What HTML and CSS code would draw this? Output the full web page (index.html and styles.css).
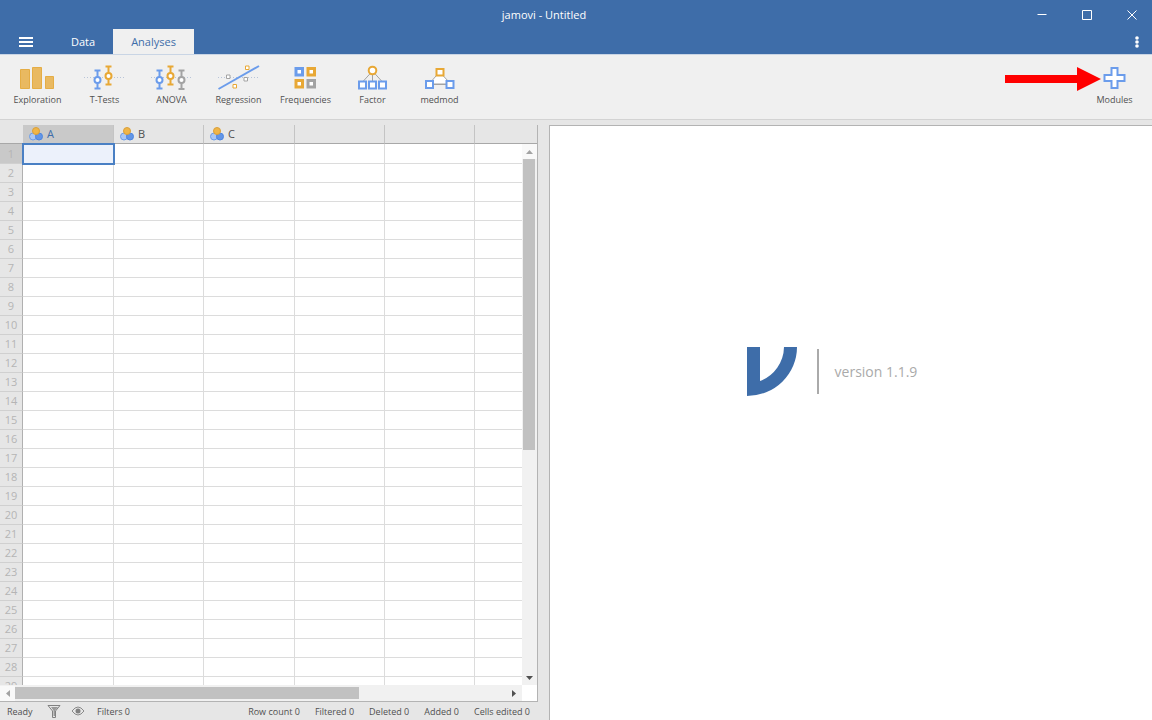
FILE: index.html
```html
<!DOCTYPE html>
<html lang="en">
<head>
<meta charset="utf-8">
<meta name="viewport" content="width=device-width,initial-scale=1">
<title>jamovi - Untitled</title>
<link rel="stylesheet" href="styles.css">
</head>
<body>

<header class="header">
  <div class="titlebar">
    <div class="title">jamovi - Untitled</div>
    <button type="button" class="win-btn" aria-label="Minimize"><svg width="12" height="12"><path d="M1.5 5.5h9"/></svg></button>
    <button type="button" class="win-btn" aria-label="Maximize"><svg width="12" height="12"><path d="M1.5 1.5h9v9h-9z"/></svg></button>
    <button type="button" class="win-btn" aria-label="Close"><svg width="12" height="12"><path d="M1.5 1.5l9 9M10.5 1.5l-9 9"/></svg></button>
  </div>
  <nav class="tabs">
    <button type="button" class="menu-btn" aria-label="Menu"><svg width="14" height="10"><path d="M0 1h14M0 5h14M0 9h14"/></svg></button>
    <button type="button" class="tab">Data</button>
    <button type="button" class="tab active">Analyses</button>
    <button type="button" class="more-btn" aria-label="Settings"><svg width="4" height="12"><circle cx="2" cy="2" r="1.8"/><circle cx="2" cy="6" r="1.8"/><circle cx="2" cy="10" r="1.8"/></svg></button>
  </nav>
</header>

<div class="ribbon">
  <button type="button" class="tool">
    <svg class="icon" viewBox="0 0 45 28"><g fill="#e9b961" stroke="#e5ad45" stroke-width="1"><path d="M5.500 5.500h9v19h-9zM17.500 3.500h9v21h-9zM30.500 12.500h8v12h-8z"/></g></svg>
    <span>Exploration</span>
  </button>
  <button type="button" class="tool">
    <svg class="icon" viewBox="0 0 45 28">
      <path class="dots" d="M2 13.500h42"/>
      <g class="blue"><path d="M15.500 6v19M12.500 6.500h6M12.500 24.500h6"/><circle cx="15.500" cy="16" r="3"/></g>
      <g class="orange"><path d="M26.500 2v19M23.500 2.500h6M23.500 20.500h6"/><circle cx="26.500" cy="12" r="3"/></g>
    </svg>
    <span>T-Tests</span>
  </button>
  <button type="button" class="tool">
    <svg class="icon" viewBox="0 0 45 28">
      <path class="dots" d="M2 13.500h41"/>
      <g class="blue"><path d="M10.500 6v19M7.500 6.500h6M7.500 24.500h6"/><circle cx="10.500" cy="16" r="3"/></g>
      <g class="orange"><path d="M21.500 2v19M18.500 2.500h6M18.500 20.500h6"/><circle cx="21.500" cy="12" r="3"/></g>
      <g class="gray"><path d="M32.500 6v19M29.500 6.500h6M29.500 25h6"/><circle cx="32.500" cy="16" r="3"/></g>
    </svg>
    <span>ANOVA</span>
  </button>
  <button type="button" class="tool">
    <svg class="icon" viewBox="0 0 45 28">
      <path class="dots" d="M2 13.500h41"/>
      <path class="blue" d="M2.500 25L43 2"/>
      <g class="gray thin"><path d="M10.500 11h3.500v3.500h-3.500zM28 13.500h3.500v3.500H28z"/></g>
      <g class="orange thin"><path d="M29.500 2h3.500v3.500h-3.500zM17 20.500h3.500V24H17z"/></g>
    </svg>
    <span>Regression</span>
  </button>
  <button type="button" class="tool">
    <svg class="icon" viewBox="0 0 45 28">
      <g class="thick">
        <path class="blue" d="M13 4.500h6.500V11H13z"/>
        <path class="orange" d="M25 4.500h6.500V11H25zM13 16.500h6.500V23H13z"/>
        <path class="gray" d="M25 16.500h6.500V23H25z"/>
      </g>
    </svg>
    <span>Frequencies</span>
  </button>
  <button type="button" class="tool">
    <svg class="icon" viewBox="0 0 45 28">
      <path class="gray" d="M22.500 7L12.500 18M22.500 7v11M22.500 7l10 11"/>
      <circle class="orange" cx="22.500" cy="6.500" r="3.800"/>
      <path class="blue" d="M9 17.500h7v7H9zM19 17.500h7v7h-7zM29 17.500h7v7h-7z"/>
    </svg>
    <span>Factor</span>
  </button>
  <button type="button" class="tool">
    <svg class="icon" viewBox="0 0 45 28">
      <path class="gray" d="M12 20L22.500 8L34 20zM12 20.500h22"/>
      <path class="orange" d="M19.500 5h7v6.500h-7z"/>
      <path class="blue" d="M9 17h7v7H9zM29.500 17h7v7h-7z"/>
    </svg>
    <span>medmod</span>
  </button>
  <button type="button" class="tool modules">
    <svg class="icon" viewBox="0 0 45 28"><path class="blue" d="M19.500 4h6v7h7v6h-7v7h-6v-7h-7v-6h7z"/></svg>
    <span>Modules</span>
    <svg class="arrow" width="96" height="24"><path d="M0 8h72V0l24 12l-24 12v-8H0z"/></svg>
  </button>
</div>

<main class="main">
  <section class="data">
    <div class="sheet">
      <div class="cells">
        <table>
          <colgroup><col class="col-num"><col class="col-wide"><col><col class="col-wide"><col><col><col></colgroup>
          <thead>
            <tr>
              <td></td>
              <th scope="col" class="selected"><svg class="nominal" viewBox="0 0 14 14"><use href="#nominal"/></svg>A</th>
              <th scope="col"><svg class="nominal" viewBox="0 0 14 14"><use href="#nominal"/></svg>B</th>
              <th scope="col"><svg class="nominal" viewBox="0 0 14 14"><use href="#nominal"/></svg>C</th>
              <th></th>
              <th></th>
              <th></th>
            </tr>
          </thead>
          <tbody id="rows"></tbody>
        </table>
      </div>
      <div class="vbar">
        <div class="vbar-head"></div>
        <div class="bar-btn off"><svg width="7" height="4"><path d="M0 4l3.500-4L7 4z"/></svg></div>
        <div class="vtrack"><div class="vthumb"></div></div>
        <div class="bar-btn"><svg width="7" height="4"><path d="M0 0l3.500 4L7 0z"/></svg></div>
      </div>
      <div class="hbar">
        <div class="bar-btn off"><svg width="4" height="7"><path d="M4 0L0 3.500L4 7z"/></svg></div>
        <div class="htrack"><div class="hthumb"></div></div>
        <div class="bar-btn"><svg width="4" height="7"><path d="M0 0l4 3.500L0 7z"/></svg></div>
      </div>
      <div class="corner"></div>
    </div>
    <footer class="status">
      <span class="ready">Ready</span>
      <svg class="filter" width="14" height="14"><path d="M1 1.500h12L8.500 7v6.500h-3V7z" fill="none" stroke="#808080"/><path d="M4 3h7L8 6.500V12H6.500V6.500z" fill="#999"/></svg>
      <svg class="eye" width="14" height="10"><path d="M1 5q6-8 12 0q-6 8-12 0z" fill="none" stroke="#8a8a8a"/><circle cx="7" cy="5" r="2.500" fill="#808080"/></svg>
      <span>Filters 0</span>
      <div class="counts">
        <span>Row count 0</span>
        <span>Filtered 0</span>
        <span>Deleted 0</span>
        <span>Added 0</span>
        <span>Cells edited 0</span>
      </div>
    </footer>
  </section>

  <section class="results">
    <div class="brand">
      <svg width="50" height="49"><path d="M0 0h13v34A37 37 0 0 0 37 0h13A50 49 0 0 1 0 49z" fill="#3e6da9"/></svg>
      <span class="version">version 1.1.9</span>
    </div>
  </section>
</main>

<!-- nominal variable icon, shared by the column headers -->
<svg class="defs" aria-hidden="true">
  <symbol id="nominal" viewBox="0 0 14 14">
    <circle cx="4" cy="9.500" r="3.500" fill="#a9c7f5" stroke="#6b9de8"/>
    <circle cx="10" cy="9.500" r="3.500" fill="#6295e6" stroke="#4d85e0"/>
    <circle cx="7" cy="4" r="3.500" fill="#efb548" stroke="#d9a03a"/>
  </symbol>
</svg>

<script>
const rows = document.getElementById('rows');
for (let i = 1; i <= 29; i++) {
  const tr = document.createElement('tr');
  tr.innerHTML = '<th scope="row">' + i + '</th>' + '<td></td>'.repeat(6);
  rows.appendChild(tr);
}
rows.rows[0].cells[0].className = 'selected';
rows.rows[0].cells[1].className = 'focus';
</script>
</body>
</html>
```
FILE: styles.css
```css
*{box-sizing:border-box;}
body{margin:0;height:100vh;display:flex;flex-direction:column;overflow:hidden;background:#e6e6e6;color:#505050;font-family:"Open Sans","Noto Sans",sans-serif;font-size:9px;}
button{font:inherit;color:inherit;border:0;padding:0;background:none;cursor:pointer;}
svg{display:block;flex:none;}

/* header */
.header{background:#3e6da9;color:#fff;border-bottom:1px solid #c9d5e5;}
.titlebar{display:flex;align-items:center;gap:21px;height:29px;padding-right:8px;}
.title{flex:1;padding-left:79px;text-align:center;font-size:11px;}
.win-btn{display:flex;justify-content:center;align-items:center;width:24px;height:28px;}
.win-btn svg{fill:none;stroke:#fff;}
.tabs{display:flex;height:25px;}
.menu-btn{width:53px;padding-left:19px;}
.menu-btn svg{stroke:#fff;stroke-width:2;}
.tab{padding:0 18px;font-size:11px;}
.tab.active{background:#f0f0f0;color:#3e6da9;}
.more-btn{margin-left:auto;padding:0 13px;}
.more-btn svg{fill:#fff;}

/* ribbon */
.ribbon{display:flex;height:65px;padding:0 4px;background:#f0f0f0;border-bottom:1px solid #d3d3d3;}
.tool{position:relative;display:flex;flex-direction:column;align-items:center;width:67px;padding-top:9px;}
.tool span{line-height:16px;}
.modules{margin-left:auto;}
.icon{width:45px;height:28px;fill:none;stroke-width:2;}
.dots{stroke:#b8c4d8;stroke-width:1;stroke-dasharray:1 2;}
.blue,.orange,.gray{fill:#fff;}
.blue{stroke:#6b9ceb;}
.orange{stroke:#e8a835;}
.gray{stroke:#a3a3a3;}
path.gray{stroke-width:1;}
.thin{stroke-width:1;}
.thick path{stroke-width:3;}
.arrow{position:absolute;right:47px;top:12px;fill:#f00;}

/* main */
.main{flex:1;display:flex;min-height:0;padding-top:5px;}
.data{width:46.7%;margin-right:11px;display:flex;flex-direction:column;min-width:0;}
.sheet{flex:1;min-height:0;display:grid;grid-template-columns:minmax(0,1fr) 15px;grid-template-rows:minmax(0,1fr) 16px;border-right:1px solid #b3b3b3;border-bottom:1px solid #b3b3b3;}
.cells{overflow:hidden;}
table{width:565px;table-layout:fixed;border-collapse:separate;border-spacing:0;font-size:11px;}
col{width:90px;}
.col-num{width:23px;}
.col-wide{width:91px;}
th,td{padding:0;font-weight:normal;line-height:18px;height:19px;}
thead th,thead td{border-bottom:1px solid #a8a8a8;background:#e6e6e6;}
thead th{padding-left:6px;text-align:left;border-right:1px solid #c4c4c4;}
thead .selected{background:#c9c9c9;color:#3e6da9;border-bottom-color:#4a80c4;}
.nominal{display:inline-block;width:14px;height:14px;margin-right:4px;vertical-align:-3px;}
tbody td{background:#fff;border-right:1px solid #dcdcdc;border-bottom:1px solid #dcdcdc;}
tbody th{text-align:center;color:#b5b5b5;border-right:1px solid #b0b0b0;border-bottom:1px solid #d0d0d0;}
tbody tr:first-child th{height:20px;}
tbody .selected{background:#c9c9c9;}
.focus{position:relative;}
.focus::after{content:"";position:absolute;inset:-1px -2px -2px -1px;border:2px solid #4a80c4;background:#ecf1fb;}

/* scrollbars */
.vbar{display:flex;flex-direction:column;background:#f1f1f1;}
.vbar-head{height:19px;background:#e6e6e6;border-bottom:1px solid #a8a8a8;}
.bar-btn{display:flex;justify-content:center;align-items:center;flex:none;width:15px;height:15px;fill:#505050;}
.bar-btn.off{background:#f9f9f9;fill:#a3a3a3;}
.vtrack,.htrack{flex:1;}
.vthumb{width:12px;height:57%;margin-left:1px;background:#c1c1c1;}
.hbar{display:flex;align-items:center;background:#f1f1f1;}
.hthumb{width:70%;height:12px;background:#c1c1c1;}
.corner{background:#fff;}

/* status bar */
.status{display:flex;align-items:center;height:18px;padding:0 8px 0 7px;white-space:nowrap;}
.ready{width:40px;}
.eye{margin:0 12px 0 10px;}
.counts{display:flex;gap:15px;margin-left:auto;}

/* results */
.results{flex:1;background:#fff;border-top:1px solid #b3b3b3;border-left:1px solid #b3b3b3;}
.brand{display:flex;justify-content:center;align-items:center;gap:20px;padding:221px 38px 0 0;}
.version{padding-left:16px;border-left:2px solid #aaa;font-size:14px;line-height:45px;color:#aaa;}
.defs{position:absolute;width:0;height:0;}
```
